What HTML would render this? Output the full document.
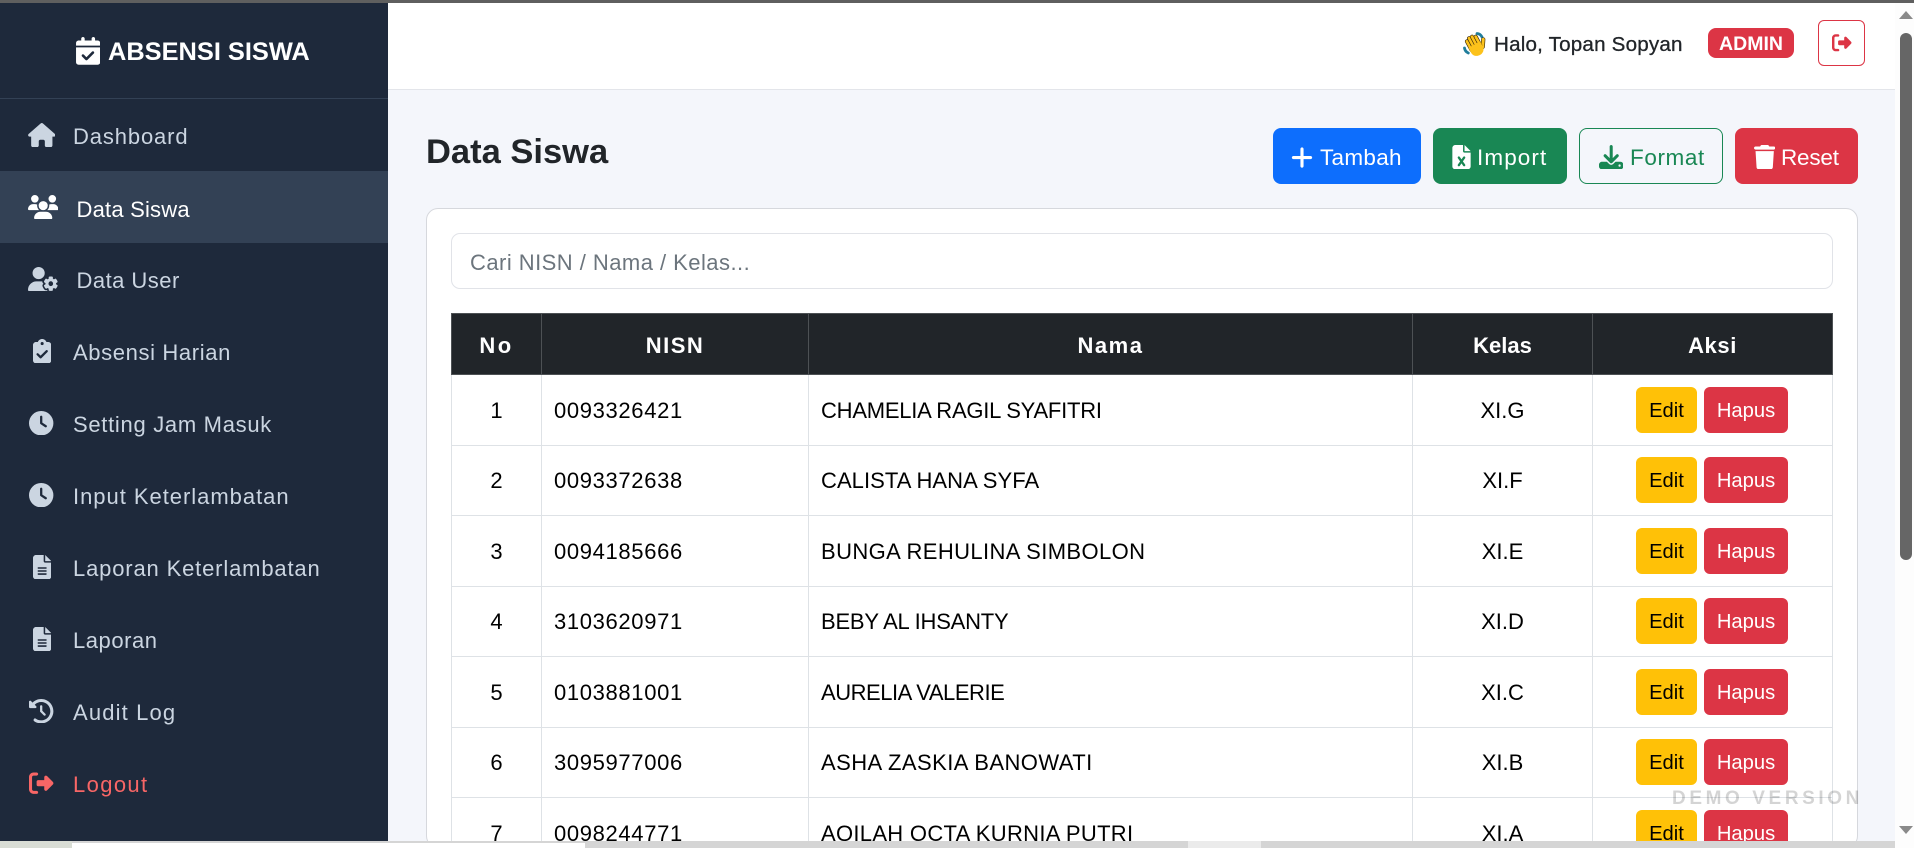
<!DOCTYPE html>
<html lang="id"><head><meta charset="utf-8"><title>Data Siswa</title>
<style>
*{box-sizing:border-box}
html,body{margin:0;padding:0;width:1914px;height:848px;overflow:hidden;background:#fff;font-family:"Liberation Sans",sans-serif}
.a{position:absolute}
.t{position:absolute;white-space:nowrap;line-height:1}
svg{position:absolute;display:block;fill:currentColor}
#top{left:0;top:0;width:1914px;height:3px;background:#5f5f5f;z-index:9}
#side{left:0;top:3px;width:388px;height:838px;background:#1e293b;color:#cbd5e1;overflow:hidden}
#active{left:0;top:168px;width:388px;height:72px;background:#334155}
#line{left:0;top:95px;width:388px;height:1px;background:#334155}
.n{font-size:22px;letter-spacing:.2px;top:0}
#bar{left:388px;top:3px;width:1507px;height:87px;background:#fff;border-bottom:1px solid #e3e5ea}
#main{left:388px;top:90px;width:1507px;height:751px;background:#f4f6fb}
#card{left:426px;top:208px;width:1432px;height:640px;background:#fff;border:1px solid #d6d8dd;border-radius:12px}
#search{left:451px;top:233px;width:1382px;height:56px;background:#fff;border:1px solid #e1e3e8;border-radius:9px}
.btn{position:absolute;top:128px;height:56px;border-radius:8px;color:#fff}
#tw{left:451px;top:313px;width:1382px;height:528px;overflow:hidden}
table{position:absolute;left:0;top:0;width:1381px;border-collapse:collapse;table-layout:fixed;font-size:22px;color:#000}
th{height:61px;background:#212529;color:#fff;font-weight:bold;border:1px solid #4d5154;padding:3px 0 0;font-size:22px}
td{height:70.5px;border:1px solid #dee2e6;padding:0;text-align:center;background:#fff}
td:not(:last-child){padding-top:2px}
td:last-child{padding-right:1px}
td.l{text-align:left;padding-left:12px}
td.d{letter-spacing:.65px}
.e,.h{display:inline-block;height:46px;line-height:48px;border-radius:6px;font-size:20.2px;vertical-align:middle}
.e{width:61px;background:#ffc107;color:#000;margin-right:7px}
.h{width:84px;background:#dc3545;color:#fff}
#clip{left:0;top:0;width:1895px;height:841px;overflow:hidden}
#sb{left:1895px;top:3px;width:19px;height:845px;background:#fdfdfd}
#thumb{left:5px;top:30px;width:12px;height:527px;background:#666;border-radius:6px}
#strip{left:0;top:841px;width:1895px;height:7px;background:#d5d5d5}
#demo{left:1672px;top:789px;font-size:19px;font-weight:bold;letter-spacing:3.6px;color:rgba(0,0,0,.17);z-index:5}
</style></head><body>
<div id="clip" class="a">
<div id="main" class="a"></div>
<div id="bar" class="a"></div>
<div id="card" class="a"></div>
<div id="search" class="a"></div>
<div class="t" style="left:470px;top:252px;font-size:22px;color:#6c757d;letter-spacing:.46px">Cari NISN / Nama / Kelas...</div>

<div id="tw" class="a">
<table>
<colgroup><col style="width:90px"><col style="width:267px"><col style="width:604px"><col style="width:180px"><col style="width:240px"></colgroup>
<tr><th style="letter-spacing:2.400px">No</th><th style="letter-spacing:1.500px">NISN</th><th style="letter-spacing:1.500px">Nama</th><th>Kelas</th><th style="letter-spacing:.6px">Aksi</th></tr>
<tr><td>1</td><td class="l d">0093326421</td><td class="l" style="letter-spacing:-.23px">CHAMELIA RAGIL SYAFITRI</td><td>XI.G</td><td><span class="e">Edit</span><span class="h">Hapus</span></td></tr>
<tr><td>2</td><td class="l d">0093372638</td><td class="l" style="letter-spacing:.06px">CALISTA HANA SYFA</td><td>XI.F</td><td><span class="e">Edit</span><span class="h">Hapus</span></td></tr>
<tr><td>3</td><td class="l d">0094185666</td><td class="l" style="letter-spacing:.39px">BUNGA REHULINA SIMBOLON</td><td>XI.E</td><td><span class="e">Edit</span><span class="h">Hapus</span></td></tr>
<tr><td>4</td><td class="l d">3103620971</td><td class="l" style="letter-spacing:-.22px">BEBY AL IHSANTY</td><td>XI.D</td><td><span class="e">Edit</span><span class="h">Hapus</span></td></tr>
<tr><td>5</td><td class="l d">0103881001</td><td class="l" style="letter-spacing:-.47px">AURELIA VALERIE</td><td>XI.C</td><td><span class="e">Edit</span><span class="h">Hapus</span></td></tr>
<tr><td>6</td><td class="l d">3095977006</td><td class="l" style="letter-spacing:.44px">ASHA ZASKIA BANOWATI</td><td>XI.B</td><td><span class="e">Edit</span><span class="h">Hapus</span></td></tr>
<tr><td>7</td><td class="l d">0098244771</td><td class="l" style="letter-spacing:.3px">AQILAH OCTA KURNIA PUTRI</td><td>XI.A</td><td><span class="e">Edit</span><span class="h">Hapus</span></td></tr>
</table>
</div>

<div class="t" style="left:426px;top:135px;font-size:34.5px;font-weight:bold;color:#212529">Data Siswa</div>

<div class="btn" style="left:1273px;width:148px;background:#0d6efd">
<svg style="left:18px;top:17px;width:22px;height:25px" viewBox="0 0 448 512"><path d="M256 80c0-17.700-14.300-32-32-32s-32 14.300-32 32V224H48c-17.700 0-32 14.300-32 32s14.300 32 32 32H192V432c0 17.700 14.300 32 32 32s32-14.300 32-32V288H400c17.700 0 32-14.300 32-32s-14.300-32-32-32H256V80z"/></svg>
<span class="t" style="left:47px;top:19px;font-size:22.5px;letter-spacing:.3px">Tambah</span></div>
<div class="btn" style="left:1433px;width:134px;background:#198754">
<svg style="left:19px;top:17px;width:19px;height:24.400px" viewBox="0 0 384 512"><path d="M64 0C28.700 0 0 28.700 0 64V448c0 35.300 28.700 64 64 64H320c35.300 0 64-28.700 64-64V160H256c-17.700 0-32-14.300-32-32V0H64zM256 0V128H384L256 0zM155.700 250.200L192 302.100l36.300-51.900c7.600-10.900 22.600-13.500 33.400-5.900s13.500 22.600 5.900 33.400L221.300 344l46.400 66.200c7.600 10.900 5 25.800-5.900 33.400s-25.800 5-33.400-5.900L192 385.800l-36.300 51.900c-7.600 10.900-22.600 13.500-33.400 5.900s-13.500-22.600-5.900-33.400L162.700 344l-46.400-66.200c-7.600-10.900-5-25.800 5.900-33.400s25.800-5 33.400 5.900z"/></svg>
<span class="t" style="left:44px;top:19px;font-size:22.5px;letter-spacing:1.1px">Import</span></div>
<div class="btn" style="left:1579px;width:144px;background:transparent;border:1px solid #198754;color:#198754">
<svg style="left:19px;top:16px;width:24.400px;height:24.400px" viewBox="0 0 512 512"><path d="M288 32c0-17.700-14.300-32-32-32s-32 14.300-32 32V274.700l-73.400-73.400c-12.500-12.500-32.800-12.500-45.300 0s-12.500 32.800 0 45.300l128 128c12.500 12.500 32.800 12.500 45.300 0l128-128c12.500-12.500 12.500-32.800 0-45.300s-32.800-12.500-45.300 0L288 274.700V32zM64 352c-35.300 0-64 28.700-64 64v32c0 35.300 28.700 64 64 64H448c35.300 0 64-28.700 64-64V416c0-35.300-28.700-64-64-64H346.500l-45.300 45.300c-25 25-65.500 25-90.500 0L165.500 352H64zm368 56a24 24 0 1 1 0 48 24 24 0 1 1 0-48z"/></svg>
<span class="t" style="left:50px;top:18px;font-size:22.5px;letter-spacing:.6px">Format</span></div>
<div class="btn" style="left:1735px;width:123px;background:#dc3545">
<svg style="left:19px;top:17px;width:21.400px;height:24.400px" viewBox="0 0 448 512"><path d="M135.200 17.700L128 32H32C14.300 32 0 46.300 0 64S14.300 96 32 96H416c17.700 0 32-14.300 32-32s-14.300-32-32-32H320l-7.200-14.300C307.400 6.800 296.300 0 284.200 0H163.800c-12.100 0-23.200 6.800-28.600 17.700zM416 128H32L53.200 467c1.600 25.300 22.600 45 47.900 45H346.900c25.300 0 46.300-19.700 47.900-45L416 128z"/></svg>
<span class="t" style="left:46px;top:19px;font-size:22.5px;letter-spacing:-.2px">Reset</span></div>

<!-- topbar -->
<svg style="left:1462px;top:31px;width:26px;height:26px" viewBox="0 0 26 26">
<path d="M15 2.500c2 .2 4 1.400 5 3.500M2.500 17c.3 2.200 1.700 4 3.800 5" fill="none" stroke="#1f7d9b" stroke-width="2.800" stroke-linecap="round"/>
<g transform="rotate(-28 14 15)" fill="#fcc21b" stroke="#33250c" stroke-width=".6">
<rect x="19.500" y="10" width="3.600" height="11" rx="1.800" transform="rotate(32 21 16)"/>
<rect x="6.500" y="5" width="3.400" height="13" rx="1.700"/>
<rect x="9.800" y="3.200" width="3.400" height="14" rx="1.700"/>
<rect x="13.100" y="3.200" width="3.400" height="14" rx="1.700"/>
<rect x="16.400" y="5" width="3.400" height="13" rx="1.700"/>
<path d="M6.500 13h13.300v5.500c0 3.800-3 6.300-6.600 6.300s-6.700-2.500-6.700-6.300z" stroke="none"/>
</g>
</svg>
<div class="t" style="left:1494px;top:35px;font-size:20.6px;letter-spacing:.2px;color:#212529;-webkit-text-stroke:.3px #212529">Halo, Topan Sopyan</div>
<div class="a" style="left:1708px;top:28px;width:86px;height:30px;background:#dc3545;border-radius:8px;color:#fff;font-weight:bold;font-size:19.500px;line-height:32px;text-align:center">ADMIN</div>
<div class="a" style="left:1818px;top:20px;width:47px;height:46px;border:1px solid #dc3545;border-radius:6px;color:#dc3545">
<svg style="left:13px;top:12px;width:19.500px;height:19.500px" viewBox="0 0 512 512"><path d="M377.900 105.900L500.700 228.700c7.200 7.200 11.300 17.100 11.300 27.300s-4.100 20.100-11.300 27.300L377.900 406.100c-6.400 6.400-15 9.900-24 9.900c-18.700 0-33.900-15.200-33.900-33.900l0-62.100-128 0c-17.700 0-32-14.300-32-32l0-64c0-17.700 14.300-32 32-32l128 0 0-62.100c0-18.700 15.200-33.900 33.900-33.900c9 0 17.600 3.600 24 9.900zM160 96L96 96c-17.700 0-32 14.300-32 32l0 256c0 17.700 14.300 32 32 32l64 0c17.700 0 32 14.300 32 32s-14.300 32-32 32l-64 0c-53 0-96-43-96-96L0 128C0 75 43 32 96 32l64 0c17.700 0 32 14.300 32 32s-14.300 32-32 32z"/></svg></div>

<!-- sidebar -->
<div id="side" class="a">
<div id="active" class="a"></div><div id="line" class="a"></div>
<svg style="left:76px;top:34px;width:24.300px;height:27.700px;color:#fff" viewBox="0 0 448 512"><path d="M128 0c17.700 0 32 14.300 32 32V64H288V32c0-17.700 14.300-32 32-32s32 14.300 32 32V64h48c26.500 0 48 21.500 48 48v48H0V112C0 85.500 21.500 64 48 64H96V32c0-17.700 14.300-32 32-32zM0 192H448V464c0 26.500-21.500 48-48 48H48c-26.500 0-48-21.500-48-48V192zM329 305c9.400-9.400 9.400-24.600 0-33.900s-24.600-9.400-33.900 0l-103 103L145 327c-9.400-9.400-24.600-9.400-33.900 0s-9.400 24.600 0 33.900l64 64c9.400 9.400 24.600 9.400 33.900 0L329 305z"/></svg>
<div class="t" style="left:108px;top:37px;font-size:25.400px;font-weight:bold;color:#fff">ABSENSI SISWA</div>

<svg style="left:27.700px;top:119.700px;width:27.600px;height:24.300px" viewBox="0 0 576 512"><path d="M575.800 255.500c0 18-15 32.100-32 32.100h-32l.7 160.200c0 2.700-.2 5.400-.5 8.100V472c0 22.100-17.900 40-40 40H456c-1.100 0-2.200 0-3.300-.1c-1.400 .1-2.800 .1-4.200 .1H416 392c-22.100 0-40-17.900-40-40V448 384c0-17.700-14.300-32-32-32H256c-17.700 0-32 14.300-32 32v64 24c0 22.100-17.900 40-40 40H160 128.100c-1.500 0-3-.1-4.500-.2c-1.200 .1-2.400 .2-3.600 .2H104c-22.100 0-40-17.900-40-40V360c0-.9 0-1.900 .1-2.800V287.600H32c-18 0-32-14-32-32.100c0-9 3-17 10-24L266.400 8c7-7 15-8 22-8s15 2 21 7L564.800 231.500c8 7 12 15 11 24z"/></svg>
<div class="t n" style="left:73px;top:123px;letter-spacing:.87px">Dashboard</div>

<svg style="left:28px;top:192px;width:30.400px;height:24.300px;color:#fff" viewBox="0 0 640 512"><path d="M144 0a80 80 0 1 1 0 160A80 80 0 1 1 144 0zM512 0a80 80 0 1 1 0 160A80 80 0 1 1 512 0zM0 298.700C0 239.800 47.800 192 106.700 192h42.700c15.900 0 31 3.500 44.600 9.700c-1.300 7.200-1.900 14.700-1.900 22.300c0 38.200 16.800 72.500 43.300 96c-.2 0-.4 0-.7 0H21.300C9.600 320 0 310.400 0 298.700zM405.300 320c-.2 0-.4 0-.7 0c26.600-23.500 43.300-57.800 43.300-96c0-7.600-.7-15-1.900-22.300c13.600-6.300 28.700-9.700 44.600-9.700h42.700C592.200 192 640 239.800 640 298.700c0 11.800-9.600 21.300-21.300 21.300H405.300zM224 224a96 96 0 1 1 192 0 96 96 0 1 1 -192 0zM128 485.300C128 411.700 187.700 352 261.300 352H378.700C452.300 352 512 411.700 512 485.300c0 14.700-11.900 26.700-26.700 26.700H154.700c-14.700 0-26.700-11.900-26.700-26.700z"/></svg>
<div class="t n" style="left:76.500px;top:196px">
<span style="color:#fff">Data Siswa</span></div>

<svg style="left:28px;top:264px;width:30.400px;height:24.300px" viewBox="0 0 640 512"><path d="M224 0a128 128 0 1 1 0 256A128 128 0 1 1 224 0zM178.300 304h91.400c11.800 0 23.400 1.200 34.500 3.300c-2.100 18.500 7.400 35.600 21.800 44.800c-16.600 10.600-26.700 31.600-20 53.300c4 12.900 9.400 25.500 16.400 37.600s15.200 23.100 24.400 33c15.700 16.900 39.600 18.400 57.200 8.700v.9c0 9.200 2.700 18.500 7.900 26.300H29.700C13.300 512 0 498.700 0 482.300C0 383.800 79.800 304 178.300 304zM436 218.200c0-7 4.500-13.300 11.300-14.800c10.500-2.400 21.500-3.700 32.700-3.700s22.200 1.300 32.700 3.700c6.800 1.500 11.300 7.800 11.300 14.800v30.600c7.900 3.400 15.400 7.700 22.300 12.800l24.900-14.300c6.100-3.500 13.700-2.700 18.500 2.400c7.600 8.100 14.300 17.200 20.100 27.200s10.300 20.400 13.500 31c2.100 6.700-1.100 13.700-7.200 17.200l-25 14.400c.4 4 .7 8.100 .7 12.300s-.2 8.200-.7 12.300l25 14.400c6.100 3.500 9.200 10.500 7.200 17.200c-3.300 10.600-7.800 21-13.500 31s-12.500 19.100-20.100 27.200c-4.800 5.100-12.500 5.900-18.500 2.400l-24.900-14.300c-6.900 5.100-14.300 9.400-22.300 12.800l0 30.600c0 7-4.500 13.300-11.300 14.800c-10.500 2.400-21.500 3.700-32.700 3.700s-22.200-1.300-32.700-3.700c-6.800-1.500-11.300-7.800-11.300-14.800V454.800c-8-3.400-15.600-7.700-22.500-12.900l-24.700 14.300c-6.100 3.500-13.700 2.700-18.500-2.400c-7.600-8.100-14.300-17.200-20.100-27.200s-10.300-20.400-13.500-31c-2.100-6.700 1.100-13.700 7.200-17.200l24.800-14.300c-.4-4.100-.7-8.200-.7-12.400s.2-8.300 .7-12.400L343.800 325c-6.100-3.500-9.200-10.500-7.200-17.200c3.300-10.600 7.700-21 13.500-31s12.500-19.100 20.100-27.200c4.800-5.100 12.400-5.900 18.500-2.400l24.800 14.300c6.900-5.100 14.500-9.300 22.500-12.700V218.200zm92.100 133.500a48.100 48.100 0 1 0 -96.100 0 48.100 48.100 0 1 0 96.100 0z"/></svg>
<div class="t n" style="left:76.500px;top:267px;letter-spacing:.47px">Data User</div>

<svg style="left:32.500px;top:336px;width:18.300px;height:24.400px" viewBox="0 0 384 512"><path d="M192 0c-41.800 0-77.400 26.700-90.500 64H64C28.700 64 0 92.700 0 128V448c0 35.300 28.700 64 64 64H320c35.300 0 64-28.700 64-64V128c0-35.300-28.700-64-64-64H282.500C269.400 26.700 233.800 0 192 0zm0 64a32 32 0 1 1 0 64 32 32 0 1 1 0-64zM305 273L177 401c-9.400 9.400-24.600 9.400-33.900 0L79 337c-9.400-9.400-9.400-24.600 0-33.900s24.600-9.400 33.900 0l47 47L271 239c9.400-9.400 24.600-9.400 33.900 0s9.400 24.600 0 33.900z"/></svg>
<div class="t n" style="left:73px;top:339px;letter-spacing:.63px">Absensi Harian</div>

<svg style="left:29.300px;top:408px;width:24.400px;height:24.400px" viewBox="0 0 512 512"><path d="M256 0a256 256 0 1 1 0 512A256 256 0 1 1 256 0zM232 120V256c0 8 4 15.500 10.700 20l96 64c11 7.400 25.900 4.400 33.300-6.700s4.400-25.900-6.700-33.300L280 243.200V120c0-13.300-10.700-24-24-24s-24 10.700-24 24z"/></svg>
<div class="t n" style="left:73px;top:411px;letter-spacing:.7px">Setting Jam Masuk</div>

<svg style="left:29.300px;top:480px;width:24.400px;height:24.400px" viewBox="0 0 512 512"><path d="M256 0a256 256 0 1 1 0 512A256 256 0 1 1 256 0zM232 120V256c0 8 4 15.500 10.700 20l96 64c11 7.400 25.900 4.400 33.300-6.700s4.400-25.900-6.700-33.300L280 243.200V120c0-13.300-10.700-24-24-24s-24 10.700-24 24z"/></svg>
<div class="t n" style="left:73px;top:483px;letter-spacing:.97px">Input Keterlambatan</div>

<svg style="left:32.500px;top:552px;width:18.300px;height:24.400px" viewBox="0 0 384 512"><path d="M64 0C28.700 0 0 28.700 0 64V448c0 35.300 28.700 64 64 64H320c35.300 0 64-28.700 64-64V160H256c-17.700 0-32-14.300-32-32V0H64zM256 0V128H384L256 0zM112 256H272c8.800 0 16 7.200 16 16s-7.200 16-16 16H112c-8.800 0-16-7.200-16-16s7.200-16 16-16zm0 64H272c8.800 0 16 7.200 16 16s-7.200 16-16 16H112c-8.800 0-16-7.200-16-16s7.200-16 16-16zm0 64H272c8.800 0 16 7.200 16 16s-7.200 16-16 16H112c-8.800 0-16-7.200-16-16s7.200-16 16-16z"/></svg>
<div class="t n" style="left:73px;top:555px;letter-spacing:.84px">Laporan Keterlambatan</div>

<svg style="left:32.500px;top:624px;width:18.300px;height:24.400px" viewBox="0 0 384 512"><path d="M64 0C28.700 0 0 28.700 0 64V448c0 35.300 28.700 64 64 64H320c35.300 0 64-28.700 64-64V160H256c-17.700 0-32-14.300-32-32V0H64zM256 0V128H384L256 0zM112 256H272c8.800 0 16 7.200 16 16s-7.200 16-16 16H112c-8.800 0-16-7.200-16-16s7.200-16 16-16zm0 64H272c8.800 0 16 7.200 16 16s-7.200 16-16 16H112c-8.800 0-16-7.200-16-16s7.200-16 16-16zm0 64H272c8.800 0 16 7.200 16 16s-7.200 16-16 16H112c-8.800 0-16-7.200-16-16s7.200-16 16-16z"/></svg>
<div class="t n" style="left:73px;top:627px;letter-spacing:.54px">Laporan</div>

<svg style="left:29.300px;top:696px;width:24.400px;height:24.400px" viewBox="0 0 512 512"><path d="M75 75L41 41C25.900 25.900 0 36.600 0 57.900V168c0 13.300 10.700 24 24 24H134.100c21.400 0 32.100-25.900 17-41l-30.800-30.800C155 85.500 203 64 256 64c106 0 192 86 192 192s-86 192-192 192c-40.800 0-78.600-12.700-109.700-34.400c-14.500-10.100-34.400-6.600-44.600 7.900s-6.600 34.400 7.900 44.600C151.200 495 201.700 512 256 512c141.400 0 256-114.600 256-256S397.400 0 256 0C185.300 0 121.300 28.700 75 75zm181 53c-13.300 0-24 10.700-24 24V256c0 6.400 2.500 12.500 7 17l72 72c9.400 9.400 24.600 9.400 33.900 0s9.400-24.600 0-33.900l-65-65V152c0-13.300-10.700-24-24-24z"/></svg>
<div class="t n" style="left:73px;top:699px;letter-spacing:1.14px">Audit Log</div>

<svg style="left:29.300px;top:767.500px;width:24.400px;height:24.400px;color:#f86666" viewBox="0 0 512 512"><path d="M377.900 105.900L500.700 228.700c7.200 7.200 11.300 17.100 11.300 27.300s-4.100 20.100-11.300 27.300L377.900 406.100c-6.400 6.400-15 9.900-24 9.900c-18.700 0-33.900-15.200-33.900-33.900l0-62.100-128 0c-17.700 0-32-14.300-32-32l0-64c0-17.700 14.300-32 32-32l128 0 0-62.100c0-18.700 15.200-33.900 33.900-33.900c9 0 17.600 3.600 24 9.900zM160 96L96 96c-17.700 0-32 14.300-32 32l0 256c0 17.700 14.300 32 32 32l64 0c17.700 0 32 14.300 32 32s-14.300 32-32 32l-64 0c-53 0-96-43-96-96L0 128C0 75 43 32 96 32l64 0c17.700 0 32 14.300 32 32s-14.300 32-32 32z"/></svg>
<div class="t n" style="left:73px;top:771px;letter-spacing:1.37px;color:#f86666">Logout</div>
</div>
</div>

<div id="top" class="a"></div>
<div id="demo" class="t">DEMO VERSION</div>

<div id="sb" class="a"><div id="thumb" class="a"></div>
<div class="a" style="left:4px;top:8px;width:0;height:0;border-left:7.500px solid transparent;border-right:7.500px solid transparent;border-bottom:8px solid #8a8a8a"></div>
<div class="a" style="left:4px;top:823px;width:0;height:0;border-left:7.500px solid transparent;border-right:7.500px solid transparent;border-top:8px solid #8a8a8a"></div>
</div>
<div id="strip" class="a">
<div class="a" style="left:0;top:0;width:72px;height:7px;background:#d9ddd5"></div>
<div class="a" style="left:72px;top:2px;width:513px;height:5px;background:#fff"></div>
<div class="a" style="left:1188px;top:0;width:73px;height:7px;background:#ebebeb"></div>
</div>
</body></html>
